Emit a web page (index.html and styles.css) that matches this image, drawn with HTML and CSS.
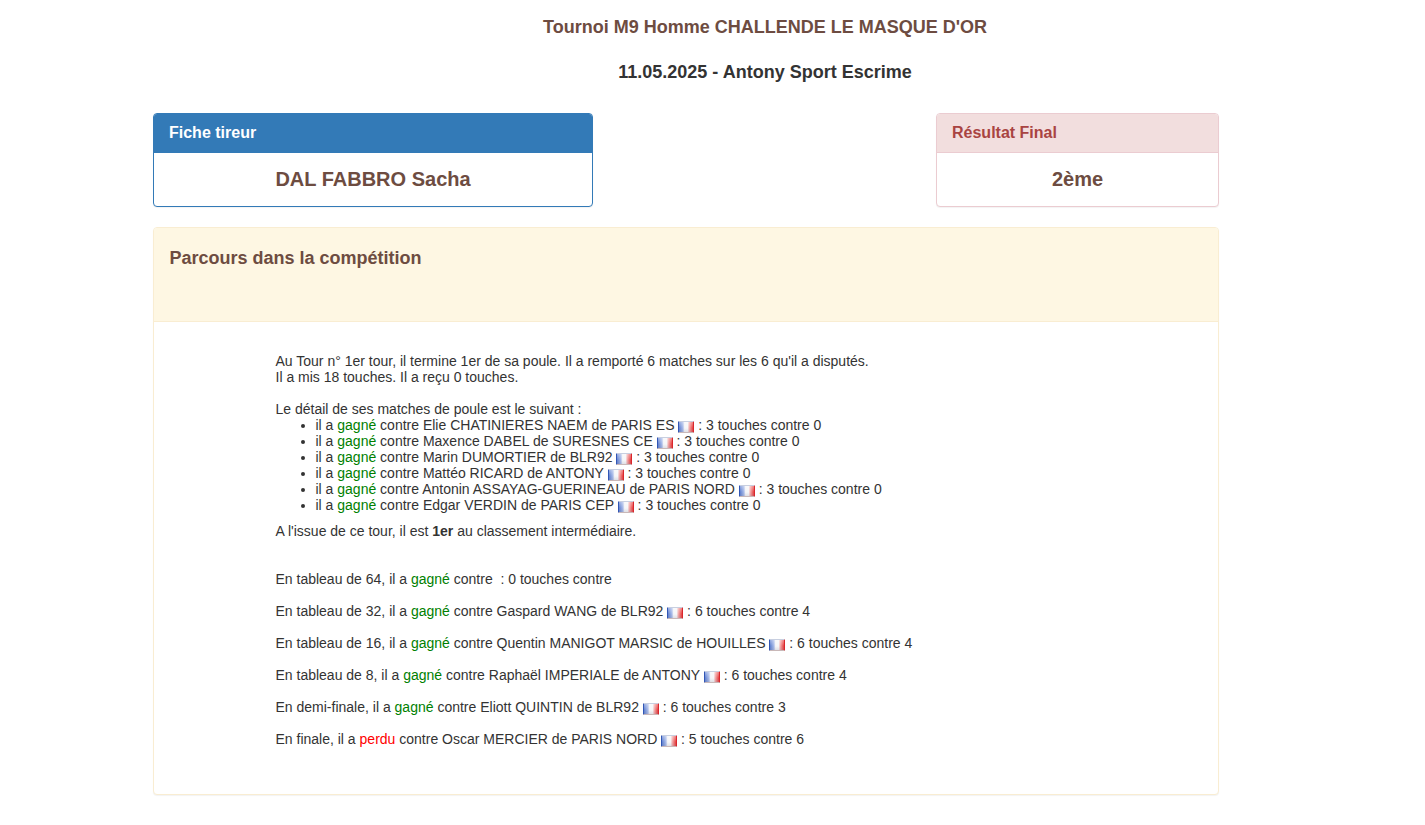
FILE: index.html
```html
<!DOCTYPE html>
<html lang="fr">
<head>
<meta charset="utf-8">
<title>Fiche tireur</title>
<link rel="stylesheet" href="styles.css">
</head>
<body>
<div class="page">
  <header class="titles">
    <h4 class="title brown">Tournoi M9 Homme CHALLENDE LE MASQUE D'OR</h4>
    <h4 class="title">11.05.2025 - Antony Sport Escrime</h4>
  </header>
  <div class="top-row">
    <section class="panel panel-blue">
      <div class="panel-head">Fiche tireur</div>
      <div class="panel-value">DAL FABBRO Sacha</div>
    </section>
    <section class="panel panel-red">
      <div class="panel-head">Résultat Final</div>
      <div class="panel-value">2ème</div>
    </section>
  </div>
  <section class="panel panel-yellow">
    <div class="panel-head">Parcours dans la compétition</div>
    <div class="panel-body">
      <p class="intro">Au Tour n° 1er tour, il termine 1er de sa poule. Il a remporté 6 matches sur les 6 qu'il a disputés.<br>Il a mis 18 touches. Il a reçu 0 touches.</p>
      <p class="detail">Le détail de ses matches de poule est le suivant :</p>
      <ul>
        <li>il a <span class="won">gagné</span> contre Elie CHATINIERES NAEM de PARIS ES <i class="flag"></i> : 3 touches contre 0</li>
        <li>il a <span class="won">gagné</span> contre Maxence DABEL de SURESNES CE <i class="flag"></i> : 3 touches contre 0</li>
        <li>il a <span class="won">gagné</span> contre Marin DUMORTIER de BLR92 <i class="flag"></i> : 3 touches contre 0</li>
        <li>il a <span class="won">gagné</span> contre Mattéo RICARD de ANTONY <i class="flag"></i> : 3 touches contre 0</li>
        <li>il a <span class="won">gagné</span> contre Antonin ASSAYAG-GUERINEAU de PARIS NORD <i class="flag"></i> : 3 touches contre 0</li>
        <li>il a <span class="won">gagné</span> contre Edgar VERDIN de PARIS CEP <i class="flag"></i> : 3 touches contre 0</li>
      </ul>
      <p class="rank">A l'issue de ce tour, il est <b>1er</b> au classement intermédiaire.</p>
      <p class="round first">En tableau de 64, il a <span class="won">gagné</span> contre &nbsp;: 0 touches contre</p>
      <p class="round">En tableau de 32, il a <span class="won">gagné</span> contre Gaspard WANG de BLR92 <i class="flag"></i> : 6 touches contre 4</p>
      <p class="round">En tableau de 16, il a <span class="won">gagné</span> contre Quentin MANIGOT MARSIC de HOUILLES <i class="flag"></i> : 6 touches contre 4</p>
      <p class="round">En tableau de 8, il a <span class="won">gagné</span> contre Raphaël IMPERIALE de ANTONY <i class="flag"></i> : 6 touches contre 4</p>
      <p class="round">En demi-finale, il a <span class="won">gagné</span> contre Eliott QUINTIN de BLR92 <i class="flag"></i> : 6 touches contre 3</p>
      <p class="round">En finale, il a <span class="lost">perdu</span> contre Oscar MERCIER de PARIS NORD <i class="flag"></i> : 5 touches contre 6</p>
    </div>
  </section>
</div>
</body>
</html>
```
FILE: styles.css
```css
* { box-sizing: border-box; }
html, body { margin: 0; padding: 0; background: #fff; }
body {
  font-family: "Liberation Sans", Arial, sans-serif;
  font-size: 14px;
  line-height: 16px;
  color: #333;
}
.page { width: 1066px; margin-left: 153px; padding-bottom: 30px; }
.titles { margin-left: 158px; padding-top: 17px; }
.title {
  margin: 0 0 25px;
  font-size: 18px;
  line-height: 20px;
  font-weight: bold;
  text-align: center;
  color: #333;
}
.title.brown { color: #6d4c41; }
.top-row { display: flex; justify-content: space-between; margin-top: 31px; margin-bottom: 20px; }
.panel { border: 1px solid #ddd; border-radius: 4px; background: #fff; box-shadow: 0 1px 1px rgba(0,0,0,.05); overflow: hidden; }
.panel-blue { width: 440px; border-color: #337ab7; }
.panel-red { width: 283px; border-color: #ebccd1; }
.panel-yellow { border-color: #f9edd2; }
.panel-head { height: 39px; padding: 10px 15px; font-size: 16px; line-height: 18px; font-weight: bold; }
.panel-blue .panel-head { background: #337ab7; color: #fff; }
.panel-red .panel-head { background: #f2dede; color: #a94442; border-bottom: 1px solid #ebccd1; }
.panel-value { height: 53px; padding-top: 15px; font-size: 20px; line-height: 22px; font-weight: bold; text-align: center; color: #6d4c41; }
.panel-yellow .panel-head {
  height: 94px;
  padding: 20px 15.5px 0;
  background: #fef7e3;
  border-bottom: 1px solid #f9edd2;
  font-size: 18px;
  line-height: 20px;
  color: #6d4c41;
}
.panel-body { padding: 31px 122px 47px 121.5px; color: #333; }
.panel-body p { margin: 0; }
.detail { margin-top: 16px !important; }
ul { margin: 0; padding-left: 40px; }
.rank { margin-top: 10px !important; }
.round { margin-top: 16px !important; }
.round.first { margin-top: 32px !important; }
.won { color: #008000; }
.lost { color: #f00; }
b { font-weight: bold; }
.flag {
  display: inline-block;
  width: 16px;
  height: 12px;
  vertical-align: -3px;
  border: 1px solid;
  border-color: #c8cfe0 #d9262c #c9b8b8 #3156b5;
  border-radius: 1px;
  background:
    linear-gradient(to bottom, rgba(255,255,255,.35), rgba(255,255,255,0) 60%, rgba(120,120,140,.18)),
    linear-gradient(to right, #5f80d0 0, #a9bbe9 28%, #f6f6f8 40%, #f6f6f8 62%, #f4b2b2 72%, #e63a3a 100%);
}
```
